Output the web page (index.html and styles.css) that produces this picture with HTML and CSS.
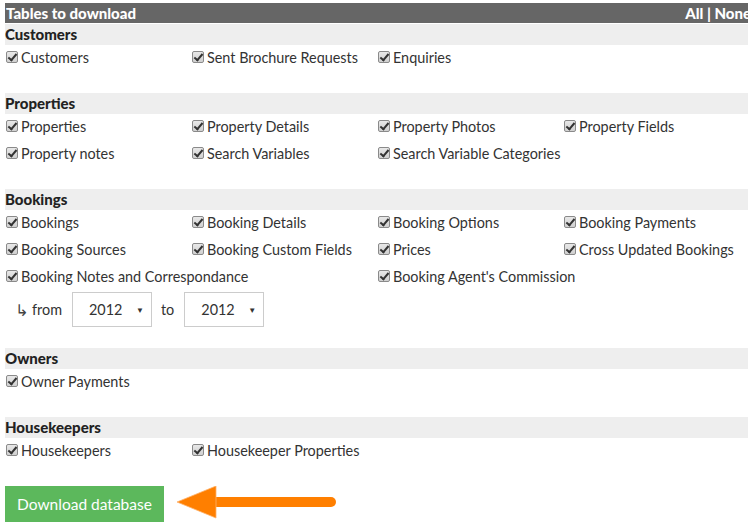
FILE: index.html
```html
<!DOCTYPE html>
<html>
<head>
<meta charset="utf-8">
<link rel="stylesheet" href="styles.css">
</head>
<body>
<div class="page">
  <div class="title-bar">
    <span>Tables to download</span>
    <span class="toggle">All | None</span>
  </div>

  <section class="group">
    <h2 class="group-head">Customers</h2>
    <div class="grid">
      <label class="item"><span class="cb"></span>Customers</label>
      <label class="item"><span class="cb"></span>Sent Brochure Requests</label>
      <label class="item"><span class="cb"></span>Enquiries</label>
    </div>
  </section>

  <section class="group">
    <h2 class="group-head">Properties</h2>
    <div class="grid">
      <label class="item"><span class="cb"></span>Properties</label>
      <label class="item"><span class="cb"></span>Property Details</label>
      <label class="item"><span class="cb"></span>Property Photos</label>
      <label class="item"><span class="cb"></span>Property Fields</label>
      <label class="item"><span class="cb"></span>Property notes</label>
      <label class="item"><span class="cb"></span>Search Variables</label>
      <label class="item"><span class="cb"></span>Search Variable Categories</label>
    </div>
  </section>

  <section class="group group-bookings">
    <h2 class="group-head">Bookings</h2>
    <div class="grid">
      <label class="item"><span class="cb"></span>Bookings</label>
      <label class="item"><span class="cb"></span>Booking Details</label>
      <label class="item"><span class="cb"></span>Booking Options</label>
      <label class="item"><span class="cb"></span>Booking Payments</label>
      <label class="item"><span class="cb"></span>Booking Sources</label>
      <label class="item"><span class="cb"></span>Booking Custom Fields</label>
      <label class="item"><span class="cb"></span>Prices</label>
      <label class="item"><span class="cb"></span>Cross Updated Bookings</label>
      <label class="item span2"><span class="cb"></span>Booking Notes and Correspondance</label>
      <label class="item"><span class="cb"></span>Booking Agent's Commission</label>
    </div>
    <div class="range">
      <span class="sub-arrow">↳</span>
      <span class="range-label">from</span>
      <span class="select">2012<span class="caret">▼</span></span>
      <span class="range-label">to</span>
      <span class="select">2012<span class="caret">▼</span></span>
    </div>
  </section>

  <section class="group">
    <h2 class="group-head">Owners</h2>
    <div class="grid">
      <label class="item"><span class="cb"></span>Owner Payments</label>
    </div>
  </section>

  <section class="group">
    <h2 class="group-head">Housekeepers</h2>
    <div class="grid">
      <label class="item"><span class="cb"></span>Housekeepers</label>
      <label class="item"><span class="cb"></span>Housekeeper Properties</label>
    </div>
  </section>

  <div class="actions">
    <button class="btn">Download database</button>
    <svg class="pointer" width="160" height="36" viewBox="0 0 160 36">
      <line x1="38" y1="16" x2="154" y2="16" stroke="#ff7f00" stroke-width="10" stroke-linecap="round"/>
      <polygon points="0,16 39,0 39,32" fill="#ff7f00" stroke="#ffb36b" stroke-width="0.8"/>
    </svg>
  </div>
</div>
</body>
</html>
```

FILE: styles.css
```css
* { box-sizing: border-box; }
html, body { margin: 0; padding: 0; background: #fff; }
body {
  font-family: Lato, "Open Sans", sans-serif;
  font-size: 14.4px;
  color: #333;
}
.page {
  width: 754px;
  padding: 3px 6px 0 5px;
  overflow: hidden;
}
.title-bar {
  height: 20px;
  background: #666;
  color: #fff;
  font-weight: 900;
  font-size: 15px;
  display: flex;
  justify-content: space-between;
  align-items: center;
  padding-left: 1px;
  margin-bottom: 1px;
  white-space: nowrap;
}
.toggle { margin-right: -3px; }
.group { padding-bottom: 24px; }
.group-head {
  margin: 0;
  height: 21px;
  line-height: 21px;
  background: #eee;
  font-size: 15px;
  font-weight: 900;
  color: #222;
  padding-left: 0;
}
.grid {
  display: grid;
  grid-template-columns: repeat(4, 186px);
  row-gap: 3px;
}
.item {
  height: 24px;
  display: flex;
  align-items: center;
  white-space: nowrap;
}
.span2 { grid-column: span 2; }
.cb {
  width: 12px;
  height: 12px;
  margin: 0 3px 0 1px;
  border: 1px solid #8a8a8a;
  border-radius: 2px;
  background: linear-gradient(#e8e8e8, #d0d0d0);
  position: relative;
  flex: none;
}
.cb::after {
  content: "";
  position: absolute;
  left: 3px;
  top: 0px;
  width: 3px;
  height: 7px;
  border: solid #333;
  border-width: 0 2px 2px 0;
  transform: rotate(40deg);
}
.range {
  display: flex;
  align-items: center;
  height: 35px;
  margin-top: 4px;
  margin-bottom: -3px;
}
.sub-arrow {
  width: 27px;
  padding-left: 10px;
  color: #444;
  font-family: "DejaVu Sans", sans-serif;
  font-size: 16px;
  position: relative;
  top: 1px;
}
.range-label { margin-right: 10px; }
.select {
  width: 80px;
  height: 35px;
  border: 1px solid #ccc;
  display: flex;
  align-items: center;
  padding-left: 16px;
  margin-right: 9px;
  position: relative;
}
.caret {
  position: absolute;
  right: 7px;
  font-size: 8px;
  color: #333;
}
.actions {
  display: flex;
  align-items: center;
  gap: 13px;
}
.btn {
  width: 159px;
  height: 36px;
  background: #5cb85c;
  border: none;
  color: #fff;
  font-family: inherit;
  font-size: 15.5px;
  padding: 0;
}
.pointer { display: block; }
```
